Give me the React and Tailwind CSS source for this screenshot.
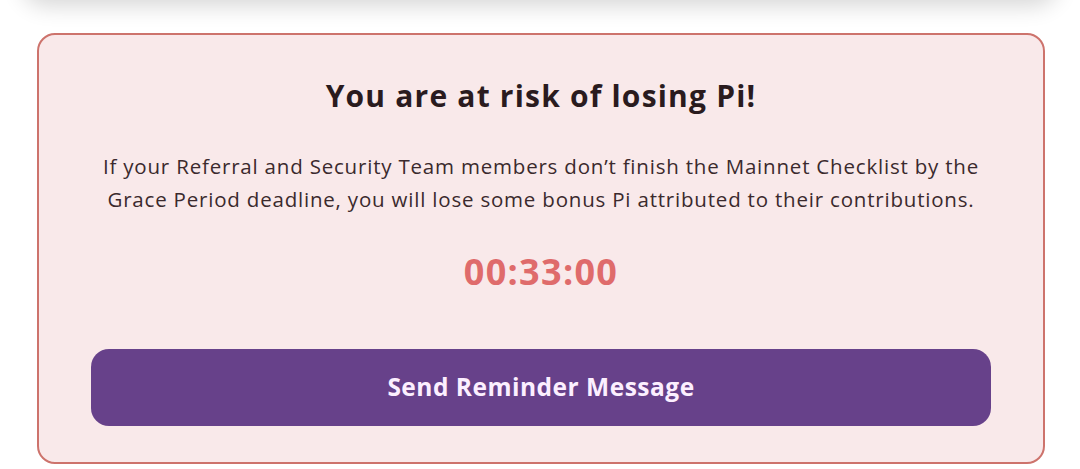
import React from 'react';

const App = () => {
  return (
    <div className="w-[1080px] h-[469px] overflow-hidden bg-white" style={{ fontFamily: '"Open Sans", "Noto Sans", sans-serif' }}>
      {/* card above, only its shadow shows */}
      <div className="mx-[22px] -mt-[40px] h-[40px] rounded-b-[24px] bg-white shadow-[0_6px_22px_rgba(0,0,0,0.16)]" />

      <div className="ml-[37px] mr-[35px] mt-[33px] h-[431px] rounded-[18px] border-2 border-[#cd736c] bg-[#f9e9ea] flex flex-col items-center">
        <h1 className="mt-[41px] text-[30px] leading-[40px] font-bold tracking-[1.2px] text-[#2a1b1e]">
          You are at risk of losing Pi!
        </h1>
        <p className="mt-[34px] px-[20px] text-center text-[20.5px] leading-[33px] tracking-[0.8px] text-[#3b2a2d]">
          If your Referral and Security Team members don’t finish the Mainnet Checklist by the
          <br />
          Grace Period deadline, you will lose some bonus Pi attributed to their contributions.
        </p>
        <div className="mt-[32px] text-[36px] leading-[48px] font-bold tracking-[1.3px] text-[#df6b6b]">00:33:00</div>
        <button className="mt-[53px] w-[900px] h-[77px] rounded-[18px] bg-[#67418a] text-[#fcefff] text-[24.5px] font-bold tracking-[0.5px]">
          Send Reminder Message
        </button>
      </div>
    </div>
  );
};

export default App;
